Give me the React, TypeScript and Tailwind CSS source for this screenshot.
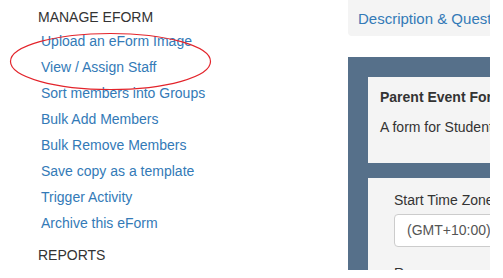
import React from "react";

const links = [
  "Upload an eForm Image",
  "View / Assign Staff",
  "Sort members into Groups",
  "Bulk Add Members",
  "Bulk Remove Members",
  "Save copy as a template",
  "Trigger Activity",
  "Archive this eForm",
];

export default function App() {
  return (
    <div
      className="relative w-[503px] h-[278px] bg-white overflow-hidden flex"
      style={{ fontFamily: '"Liberation Sans", Arial, sans-serif' }}
    >
      {/* Left nav */}
      <div className="w-[348px] shrink-0 pl-[38px] pt-[7px]">
        <div className="text-[14px] leading-[20px] text-[#333]">MANAGE EFORM</div>
        <ul className="mt-[4px] pl-[3px]">
          {links.map((l) => (
            <li key={l} className="h-[26px] text-[14px] leading-[20px] text-[#337ab7]">
              {l}
            </li>
          ))}
        </ul>
        <div className="mt-[6px] text-[14px] leading-[20px] text-[#333]">REPORTS</div>
      </div>

      {/* Right content */}
      <div className="w-[142px] h-[270px] shrink-0 overflow-hidden flex flex-col">
        <div className="mt-[-10px] h-[46px] shrink-0 w-[160px] bg-[#f4f4f4] rounded-[4px] pl-[10px] pt-[19px]">
          <div className="text-[15px] leading-[20px] text-[#337ab7] whitespace-nowrap">
            Description &amp; Questions
          </div>
        </div>
        <div className="mt-[21px] flex-1 bg-[#56708a] pl-[20px] pt-[20px] flex flex-col gap-[15px]">
          <div className="h-[86px] shrink-0 w-[200px] bg-[#f4f4f4] pl-[12px] pt-[10px]">
            <div className="text-[14px] leading-[20px] font-bold text-[#333] whitespace-nowrap">
              Parent Event Form
            </div>
            <div className="mt-[10px] text-[14px] leading-[20px] text-[#333] whitespace-nowrap">
              A form for Students
            </div>
          </div>
          <div className="flex-1 w-[200px] bg-[#f4f4f4] pl-[26px] pt-[12px]">
            <div className="text-[14px] leading-[20px] text-[#333] whitespace-nowrap">
              Start Time Zone
            </div>
            <div className="mt-[4px] h-[33px] w-[200px] bg-white border border-[#ccc] rounded-[4px] pl-[12px] flex items-center text-[14px] text-[#555] whitespace-nowrap">
              (GMT+10:00) Canberra
            </div>
            <div className="mt-[16px] text-[14px] leading-[20px] text-[#333] whitespace-nowrap">
              Responses open
            </div>
          </div>
        </div>
      </div>

      {/* Red annotation ellipse */}
      <svg
        className="absolute left-0 top-0 pointer-events-none"
        width="503"
        height="278"
        viewBox="0 0 503 278"
      >
        <ellipse cx="110.5" cy="61.5" rx="100" ry="28" fill="none" stroke="#e3242b" strokeWidth="1.2" />
      </svg>
    </div>
  );
}
